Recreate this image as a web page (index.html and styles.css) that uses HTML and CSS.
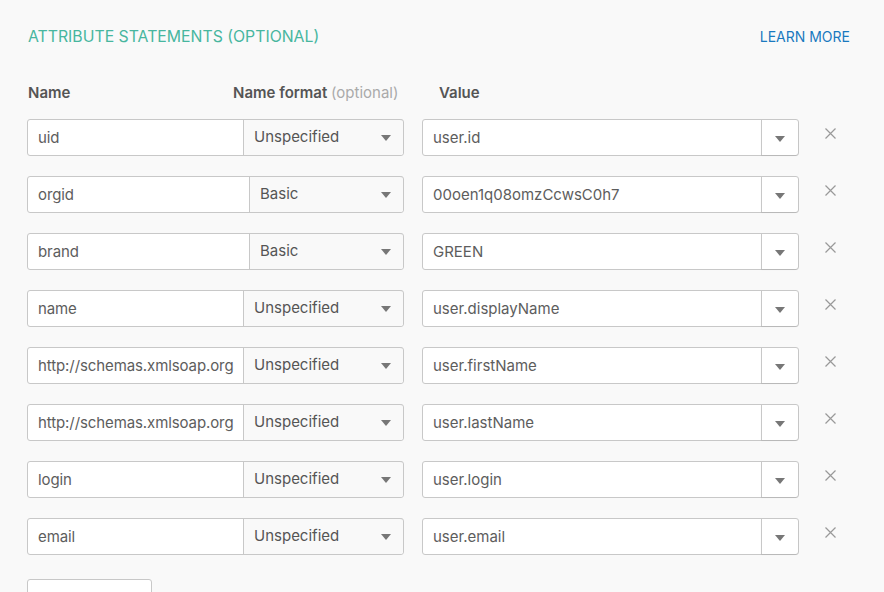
FILE: index.html
```html
<!DOCTYPE html>
<html>
<head>
<meta charset="utf-8">
<link rel="stylesheet" href="styles.css">
</head>
<body>
<div class="page">
  <div class="titlebar">
    <h2 class="title">ATTRIBUTE STATEMENTS (OPTIONAL)</h2>
    <a class="learn">LEARN MORE</a>
  </div>
  <div class="colheads">
    <div class="ch-name">Name</div>
    <div class="ch-format">Name format <span class="opt">(optional)</span></div>
    <div class="ch-value">Value</div>
  </div>
  <div class="rows">
    <div class="row">
      <div class="combo"><div class="name">uid</div><div class="fmt">Unspecified<span class="caret"></span></div></div>
      <div class="value"><div class="vtext">user.id</div><div class="vbtn"><span class="caret"></span></div></div>
      <svg class="x" viewBox="0 0 11 11"><path d="M0.5 0.5L10.5 10.5M10.5 0.5L0.5 10.5"/></svg>
    </div>
    <div class="row">
      <div class="combo basic"><div class="name">orgid</div><div class="fmt">Basic<span class="caret"></span></div></div>
      <div class="value"><div class="vtext">00oen1q08omzCcwsC0h7</div><div class="vbtn"><span class="caret"></span></div></div>
      <svg class="x" viewBox="0 0 11 11"><path d="M0.5 0.5L10.5 10.5M10.5 0.5L0.5 10.5"/></svg>
    </div>
    <div class="row">
      <div class="combo basic"><div class="name">brand</div><div class="fmt">Basic<span class="caret"></span></div></div>
      <div class="value"><div class="vtext">GREEN</div><div class="vbtn"><span class="caret"></span></div></div>
      <svg class="x" viewBox="0 0 11 11"><path d="M0.5 0.5L10.5 10.5M10.5 0.5L0.5 10.5"/></svg>
    </div>
    <div class="row">
      <div class="combo"><div class="name">name</div><div class="fmt">Unspecified<span class="caret"></span></div></div>
      <div class="value"><div class="vtext">user.displayName</div><div class="vbtn"><span class="caret"></span></div></div>
      <svg class="x" viewBox="0 0 11 11"><path d="M0.5 0.5L10.5 10.5M10.5 0.5L0.5 10.5"/></svg>
    </div>
    <div class="row">
      <div class="combo"><div class="name">http://schemas.xmlsoap.org</div><div class="fmt">Unspecified<span class="caret"></span></div></div>
      <div class="value"><div class="vtext">user.firstName</div><div class="vbtn"><span class="caret"></span></div></div>
      <svg class="x" viewBox="0 0 11 11"><path d="M0.5 0.5L10.5 10.5M10.5 0.5L0.5 10.5"/></svg>
    </div>
    <div class="row">
      <div class="combo"><div class="name">http://schemas.xmlsoap.org</div><div class="fmt">Unspecified<span class="caret"></span></div></div>
      <div class="value"><div class="vtext">user.lastName</div><div class="vbtn"><span class="caret"></span></div></div>
      <svg class="x" viewBox="0 0 11 11"><path d="M0.5 0.5L10.5 10.5M10.5 0.5L0.5 10.5"/></svg>
    </div>
    <div class="row">
      <div class="combo"><div class="name">login</div><div class="fmt">Unspecified<span class="caret"></span></div></div>
      <div class="value"><div class="vtext">user.login</div><div class="vbtn"><span class="caret"></span></div></div>
      <svg class="x" viewBox="0 0 11 11"><path d="M0.5 0.5L10.5 10.5M10.5 0.5L0.5 10.5"/></svg>
    </div>
    <div class="row">
      <div class="combo"><div class="name">email</div><div class="fmt">Unspecified<span class="caret"></span></div></div>
      <div class="value"><div class="vtext">user.email</div><div class="vbtn"><span class="caret"></span></div></div>
      <svg class="x" viewBox="0 0 11 11"><path d="M0.5 0.5L10.5 10.5M10.5 0.5L0.5 10.5"/></svg>
    </div>
  </div>
  <div class="addbtn"></div>
</div>
</body>
</html>
```
FILE: styles.css
```css
html, body {
  margin: 0;
  padding: 0;
  background: #f9f9f9;
  font-family: Inter, Lato, sans-serif;
  color: #5d5d5d;
  overflow: hidden;
}
.page {
  width: 884px;
  height: 592px;
  padding: 26px 34px 0 27px;
  box-sizing: border-box;
}
.titlebar {
  display: flex;
  justify-content: space-between;
  align-items: center;
  height: 20px;
}
.title {
  margin: 0;
  font-size: 15.8px;
  font-weight: 400;
  color: #47b69f;
  padding-left: 1px;
}
.learn {
  font-size: 14px;
  color: #1a79bf;
}
.colheads {
  display: flex;
  align-items: center;
  height: 20px;
  margin-top: 36px;
  font-size: 15px;
  font-weight: 600;
  color: #555;
}
.ch-name { width: 205px; padding-left: 1px; }
.ch-format { width: 206px; }
.ch-format .opt { font-weight: 400; color: #aaa; }
.rows {
  margin-top: 17px;
  display: flex;
  flex-direction: column;
  gap: 20px;
}
.row {
  display: flex;
  align-items: flex-start;
  height: 37px;
}
.combo {
  display: flex;
  width: 377px;
  height: 37px;
  box-sizing: border-box;
  border: 1px solid #c8c8c8;
  border-radius: 3px;
  background: #fff;
  font-size: 15px;
}
.name {
  width: 215px;
  flex: none;
  box-sizing: border-box;
  padding: 0 6px 0 10px;
  display: flex;
  align-items: center;
  color: #5d5d5d;
  white-space: nowrap;
  overflow: hidden;
  letter-spacing: -0.1px;
}
.combo.basic .name { width: 221px; }
.fmt {
  flex: 1;
  display: flex;
  align-items: center;
  justify-content: space-between;
  border-left: 1px solid #c8c8c8;
  border-top: 1px solid #c8c8c8;
  background: #f9f9f9;
  padding: 0 12px 2px 10px;
  margin-top: -1px;
  height: 36px;
  border-radius: 0 3px 3px 0;
  color: #555;
  box-sizing: border-box;
}
.caret {
  width: 0;
  height: 0;
  border-left: 5px solid transparent;
  border-right: 5px solid transparent;
  border-top: 6px solid #777;
  margin-top: 2px;
}
.value {
  margin-left: 18px;
  width: 377px;
  height: 37px;
  box-sizing: border-box;
  display: flex;
  border: 1px solid #c8c8c8;
  border-radius: 3px;
  background: #fff;
  font-size: 15px;
}
.vtext {
  flex: 1;
  display: flex;
  align-items: center;
  padding: 0 10px;
  color: #5d5d5d;
}
.vbtn {
  width: 36px;
  flex: none;
  border-left: 1px solid #c8c8c8;
  display: flex;
  align-items: center;
  justify-content: center;
  box-shadow: 0 1px 1px rgba(0,0,0,0.08);
  border-radius: 0 3px 3px 0;
}
.x {
  margin-left: 26px;
  margin-top: 9px;
  width: 11px;
  height: 11px;
  flex: none;
  fill: none;
  stroke: #999;
  stroke-width: 1.2;
}
.addbtn {
  margin-top: 24px;
  width: 125px;
  height: 30px;
  border: 1px solid #c8c8c8;
  border-radius: 3px;
  background: #fff;
  box-sizing: border-box;
}
```
